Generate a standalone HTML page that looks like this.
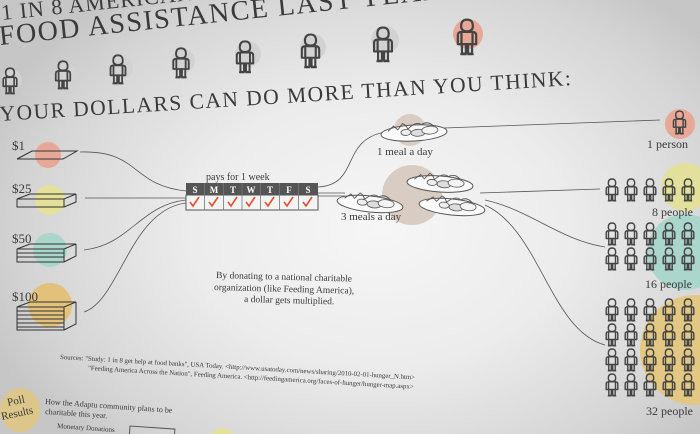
<!DOCTYPE html>
<html><head><meta charset="utf-8"><style>
html,body{margin:0;padding:0;width:700px;height:434px;overflow:hidden}
body{background:radial-gradient(ellipse 420px 300px at 380px 230px,#f6f6f6 0%,#ececec 45%,#d4d4d4 85%,#c6c6c6 100%)}
svg{position:absolute;left:0;top:0}
text{font-family:"Liberation Serif",serif;fill:#3a3a3a}
</style></head><body>
<svg width="700" height="434" viewBox="0 0 700 434">
<defs>
<symbol id="p" viewBox="0 0 16 24"><path d="M8 1C5 1 4.3 3 4.3 5.2C4.3 7.2 5.5 8.4 8 8.4C10.5 8.4 11.7 7.2 11.7 5.2C11.7 3 11 1 8 1Z M2.2 16.5V11Q2.2 8.8 4.5 8.8H11.5Q13.8 8.8 13.8 11V16.5Z M4.5 9V16.5 M11.5 9V16.5 M4.8 16.5V22.5H7.3V16.5 M8.7 16.5V22.5H11.2V16.5 M3.8 22.8H7.8 M8.2 22.8H12.2" fill="none" stroke="#444" stroke-width="1.4" stroke-linejoin="round"/></symbol>
<g id="row5"><use href="#p" x="0" width="18" height="24"/><use href="#p" x="19" width="18" height="24"/><use href="#p" x="38" width="18" height="24"/><use href="#p" x="57" width="18" height="24"/><use href="#p" x="76" width="18" height="24"/><use href="#p" x="95" width="18" height="24"/></g>
<g id="plate"><ellipse cx="0" cy="0" rx="33" ry="8" fill="#fafafa" stroke="#555" stroke-width="1"/><path d="M-26 -3l6-5l4 4l5-6q4 2 5 6q8-8 14-4q6-4 12 2" fill="none" stroke="#555" stroke-width=".9"/><ellipse cx="4" cy="0" rx="7" ry="3.5" fill="#ddd" stroke="#555" stroke-width=".8"/><ellipse cx="-8" cy="-1" rx="5" ry="3" fill="#eee" stroke="#555" stroke-width=".8"/><ellipse cx="16" cy="-2" rx="8" ry="4" fill="#f4f4f4" stroke="#555" stroke-width=".8"/></g>
</defs>

<!-- titles -->
<text x="2" y="20" font-size="22" letter-spacing="1" transform="rotate(-6 2 20)">1 IN 8 AMERICANS RECEIVED</text>
<text x="0" y="45" font-size="28" letter-spacing="1.5" transform="rotate(-6 0 45)">FOOD ASSISTANCE LAST YEAR</text>

<!-- top people row -->
<g fill="#d2d2d2"><circle cx="12" cy="80" r="10"/><circle cx="66" cy="74" r="11"/><circle cx="122" cy="68" r="11"/><circle cx="183" cy="61" r="12"/><circle cx="248" cy="54" r="13"/><circle cx="313" cy="47" r="13"/><circle cx="385" cy="40" r="14"/></g>
<circle cx="468" cy="34" r="15" fill="#e7a898"/>
<use href="#p" x="0" y="67" width="20" height="28"/>
<use href="#p" x="52" y="60" width="22" height="30"/>
<use href="#p" x="107" y="54" width="22" height="31"/>
<use href="#p" x="169" y="47" width="24" height="32"/>
<use href="#p" x="232" y="40" width="26" height="34"/>
<use href="#p" x="297" y="33" width="27" height="36"/>
<use href="#p" x="369" y="26" width="28" height="37"/>
<use href="#p" x="452" y="18" width="30" height="38"/>

<text x="0" y="121" font-size="21.5" letter-spacing="1.5" transform="rotate(-3.6 0 121)">YOUR DOLLARS CAN DO MORE THAN YOU THINK:</text>

<!-- money -->
<circle cx="48" cy="155" r="13" fill="#e8a898"/>
<circle cx="50" cy="200" r="15" fill="#e4e29a"/>
<circle cx="50" cy="250" r="17" fill="#abd6cb"/>
<circle cx="50" cy="305" r="22" fill="#e2c27a"/>
<text x="12" y="150" font-size="13">$1</text>
<text x="12" y="193" font-size="13">$25</text>
<text x="12" y="243" font-size="13">$50</text>
<text x="12" y="301" font-size="13">$100</text>
<g fill="none" stroke="#333" stroke-width="1">
<path d="M17 159L32 151H77L63 159Z"/>
<path d="M17 199L30 194H76L64 199Z M17 199V207H64V199 M64 207L76 202V194"/>
<path d="M17 249L30 244H76L64 249Z M17 249V262H64V249 M64 262L76 256V244 M17 253H64M17 257H64"/>
<path d="M17 307L30 302H76L64 307Z M17 307V330H64V307 M64 330L76 324V302 M17 311H64M17 315H64M17 319H64M17 323H64M17 327H64"/>
</g>
<!-- curves -->
<g fill="none" stroke="#555" stroke-width=".8">
<path d="M80 152C140 150 130 185 186 191"/>
<path d="M85 198H186"/>
<path d="M84 250C130 245 140 205 186 200"/>
<path d="M84 312C120 300 130 210 186 203"/>
<path d="M318 187C360 185 340 140 385 132"/>
<path d="M318 193H345"/><path d="M318 196H345"/>
<path d="M444 128L660 120"/>
<path d="M480 193L600 189"/>
<path d="M485 200C530 210 560 240 605 247"/>
<path d="M485 205C540 230 550 330 605 345"/>
</g>
<!-- calendar -->
<text x="206" y="180" font-size="10">pays for 1 week</text>
<rect x="186" y="183" width="132" height="12" fill="#555"/>
<rect x="186" y="195" width="132" height="15" fill="#f4f4f4" stroke="#555"/>
<g font-size="9" font-weight="bold" text-anchor="middle">
<text x="195" y="193" style="fill:#fff">S</text><text x="214" y="193" style="fill:#fff">M</text><text x="233" y="193" style="fill:#fff">T</text><text x="251" y="193" style="fill:#fff">W</text><text x="270" y="193" style="fill:#fff">T</text><text x="289" y="193" style="fill:#fff">F</text><text x="308" y="193" style="fill:#fff">S</text></g>
<g stroke="#777" stroke-width=".8"><path d="M204.5 183V210M223.5 183V210M242 183V210M260.5 183V210M279.5 183V210M298.5 183V210"/></g>
<g fill="none" stroke="#e0502f" stroke-width="1.6">
<path d="M190 202l3 4l6-9"/><path d="M209 202l3 4l6-9"/><path d="M228 202l3 4l6-9"/><path d="M246 202l3 4l6-9"/><path d="M265 202l3 4l6-9"/><path d="M284 202l3 4l6-9"/><path d="M303 202l3 4l6-9"/></g>

<!-- meals -->
<circle cx="410" cy="130" r="16" fill="#d9ccc2"/>
<circle cx="412" cy="195" r="30" fill="#d9ccc2"/>
<use href="#plate" transform="translate(414 133) rotate(-3)"/>
<use href="#plate" transform="translate(370 204) rotate(6)"/>
<use href="#plate" transform="translate(440 184) rotate(4)"/>
<use href="#plate" transform="translate(452 207) rotate(6)"/>
<text x="377" y="155" font-size="11">1 meal a day</text>
<text x="341" y="220" font-size="11">3 meals a day</text>

<text x="216" y="278" font-size="9.5" transform="rotate(1.5 216 278)">By donating to a national charitable</text>
<text x="214" y="290" font-size="9.5" transform="rotate(1.5 214 290)">organization (like Feeding America),</text>
<text x="244" y="302" font-size="9.5" transform="rotate(1.5 244 302)">a dollar gets multiplied.</text>

<text x="60" y="359" font-size="6.8" transform="rotate(3.3 60 359)">Sources: "Study: 1 in 8 get help at food banks", USA Today. &lt;http://www.usatoday.com/news/sharing/2010-02-01-hunger_N.htm&gt;</text>
<text x="88" y="370" font-size="6.8" transform="rotate(3.3 88 370)">"Feeding America Across the Nation", Feeding America. &lt;http://feedingamerica.org/faces-of-hunger/hunger-map.aspx&gt;</text>

<!-- poll -->
<ellipse cx="20" cy="410" rx="20" ry="22" fill="#dcc68a"/>
<text x="8" y="406" font-size="11" transform="rotate(-12 8 406)">Poll</text>
<text x="2" y="420" font-size="11" transform="rotate(-12 2 420)">Results</text>
<text x="45" y="404" font-size="8" transform="rotate(4 45 404)">How the Adaptu community plans to be</text>
<text x="45" y="414" font-size="8" transform="rotate(4 45 414)">charitable this year.</text>
<text x="57" y="428" font-size="7" transform="rotate(4 57 428)">Monetary Donations</text>
<rect x="130" y="426" width="45" height="10" fill="none" stroke="#555" transform="rotate(4 130 426)"/>
<circle cx="222" cy="440" r="12" fill="#e4e29a"/>

<!-- right people -->
<circle cx="680" cy="124" r="15" fill="#e8a898"/>
<circle cx="685" cy="187" r="24" fill="#e2e09a"/>
<circle cx="685" cy="252" r="38" fill="#abd6cb"/>
<circle cx="695" cy="350" r="55" fill="#e2c882"/>
<use href="#p" x="670" y="110" width="19" height="25"/>
<text x="647" y="148" font-size="12">1 person</text>
<use href="#row5" x="603" y="178"/>
<text x="652" y="216" font-size="12">8 people</text>
<use href="#row5" x="603" y="222"/>
<use href="#row5" x="603" y="247"/>
<text x="645" y="288" font-size="12">16 people</text>
<use href="#row5" x="603" y="298"/>
<use href="#row5" x="603" y="323"/>
<use href="#row5" x="603" y="348"/>
<use href="#row5" x="603" y="373"/>
<text x="646" y="415" font-size="12">32 people</text>
</svg>
</body></html>
